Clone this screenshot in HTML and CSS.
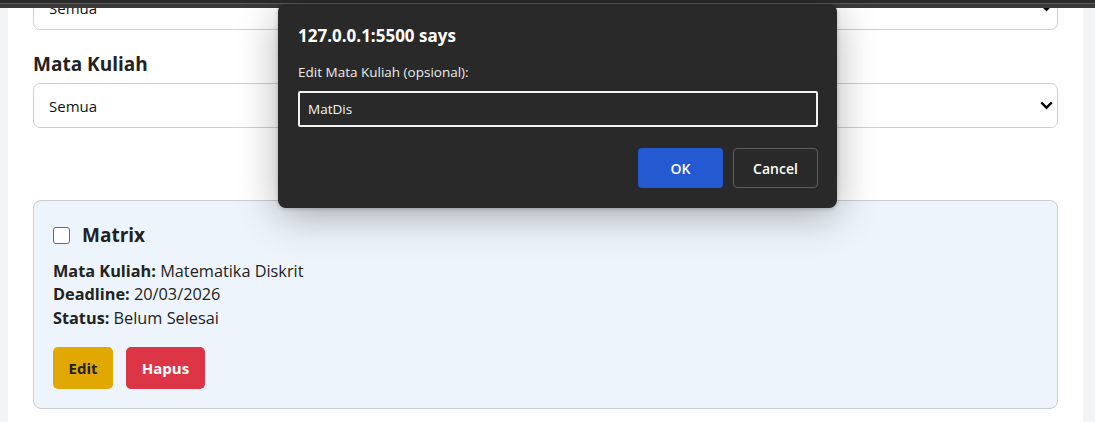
FILE: index.html
```html
<!DOCTYPE html>
<html lang="id">
<head>
<meta charset="utf-8">
<title>Daftar Tugas</title>
<link rel="stylesheet" href="styles.css">
</head>
<body>
<div class="tabbar"><div class="tabbar-line"></div></div>
<div class="page">
  <main class="container">
    <div class="filter">
      <select class="select"><option>Semua</option></select>
    </div>
    <div class="filter">
      <label class="filter-label">Mata Kuliah</label>
      <select class="select"><option>Semua</option></select>
    </div>
    <div class="spacer"></div>
    <section class="card">
      <div class="card-head">
        <input type="checkbox" class="check">
        <h3 class="card-title">Matrix</h3>
      </div>
      <div class="details">
        <p><strong>Mata Kuliah:</strong> Matematika Diskrit</p>
        <p><strong>Deadline:</strong> 20/03/2026</p>
        <p><strong>Status:</strong> Belum Selesai</p>
      </div>
      <div class="actions">
        <button class="btn btn-edit">Edit</button>
        <button class="btn btn-delete">Hapus</button>
      </div>
    </section>
  </main>
</div>

<div class="dialog">
  <div class="dialog-title">127.0.0.1:5500 says</div>
  <div class="dialog-label">Edit Mata Kuliah (opsional):</div>
  <div class="dialog-input">MatDis</div>
  <div class="dialog-actions">
    <button class="dbtn dbtn-ok">OK</button>
    <button class="dbtn dbtn-cancel">Cancel</button>
  </div>
</div>
</body>
</html>
```

FILE: styles.css
```css
* { box-sizing: border-box; }
html, body { margin: 0; padding: 0; }
body {
  font-family: "Open Sans", "Noto Sans", sans-serif;
  color: #222;
  background: #f3f4f6;
  height: 422px;
  overflow: hidden;
  position: relative;
}
.tabbar {
  height: 8px;
  background: #3a3a3a;
  border-top: 3px solid #2b2b2b;
  position: relative;
  z-index: 2;
}
.tabbar-line {
  height: 1px;
  background: #5a5a5a;
}
.page {
  margin-top: -25px;
}
.container {
  background: #fff;
  margin: 0 12px 0 8px;
  padding: 0 25px 20px;
  min-height: 500px;
}
.filter { display: flex; flex-direction: column; }
.filter-label {
  font-weight: 700;
  font-size: 19px;
  line-height: 26px;
  margin: 21px 0 6px;
  color: #222;
}
.select {
  appearance: none;
  -webkit-appearance: none;
  height: 45px;
  width: 100%;
  border: 1px solid #cfcfcf;
  border-radius: 7px;
  background: #fff url("data:image/svg+xml;utf8,<svg xmlns='http://www.w3.org/2000/svg' width='13' height='9' viewBox='0 0 13 9'><path d='M1.3 1.5 L6.5 6.7 L11.7 1.5' fill='none' stroke='black' stroke-width='2.4'/></svg>") no-repeat right 4px center;
  font-family: "Open Sans", "Noto Sans", sans-serif;
  font-size: 15px;
  color: #111;
  padding: 0 15px;
}
.filter:first-child .select { margin-top: 2px; }
.spacer { height: 72px; }
.card {
  background: #edf4fb;
  border: 1px solid #c9ccd0;
  border-radius: 8px;
  padding: 20px 19px 19px;
}
.card-head {
  display: flex;
  align-items: center;
  gap: 12px;
  height: 28px;
}
.check {
  width: 17px;
  height: 17px;
  margin: 0;
  appearance: none;
  -webkit-appearance: none;
  border: 1.5px solid #6b6b6b;
  border-radius: 3px;
  background: #fff;
}
.card-title {
  margin: 0;
  font-size: 19px;
  font-weight: 700;
  color: #222;
}
.details { margin-top: 11px; }
.details p {
  margin: 0;
  font-size: 16.3px;
  line-height: 23.3px;
  color: #222;
}
.details strong { font-weight: 700; }
.actions {
  display: flex;
  gap: 13px;
  margin-top: 17px;
}
.btn {
  border: none;
  border-radius: 5px;
  height: 42px;
  font-family: "Open Sans", "Noto Sans", sans-serif;
  font-weight: 700;
  font-size: 15px;
  padding: 0 15px;
}
.btn-edit { background: #e0a800; color: #222; width: 60px; }
.btn-delete { background: #dc3545; color: #fff; width: 79px; }

.dialog {
  position: absolute;
  left: 278px;
  top: 4px;
  width: 559px;
  height: 204px;
  background: #292929;
  border-radius: 8px;
  box-shadow: 0 8px 40px rgba(0, 0, 0, 0.3), 0 1px 4px rgba(0, 0, 0, 0.2);
  padding: 22px 19px 20px 20px;
  display: flex;
  flex-direction: column;
  z-index: 5;
  color: #fff;
}
.dialog-title {
  font-weight: 700;
  font-size: 17px;
  line-height: 20px;
}
.dialog-label {
  margin-top: 16px;
  font-size: 13.5px;
  line-height: 20px;
  color: #ececec;
}
.dialog-input {
  margin-top: 9px;
  height: 36px;
  border: 2px solid #f2f2f2;
  border-radius: 2px;
  font-size: 13.5px;
  line-height: 32px;
  padding: 0 8px;
  color: #f5f5f5;
}
.dialog-actions {
  margin-top: 21px;
  display: flex;
  justify-content: flex-end;
  gap: 10px;
}
.dbtn {
  width: 85px;
  height: 40px;
  border-radius: 4px;
  font-family: "Open Sans", "Noto Sans", sans-serif;
  font-size: 14px;
  font-weight: 600;
  color: #fff;
}
.dbtn-ok { background: #2559d2; border: none; }
.dbtn-cancel { background: #292929; border: 1px solid #5d5d5d; }
```
